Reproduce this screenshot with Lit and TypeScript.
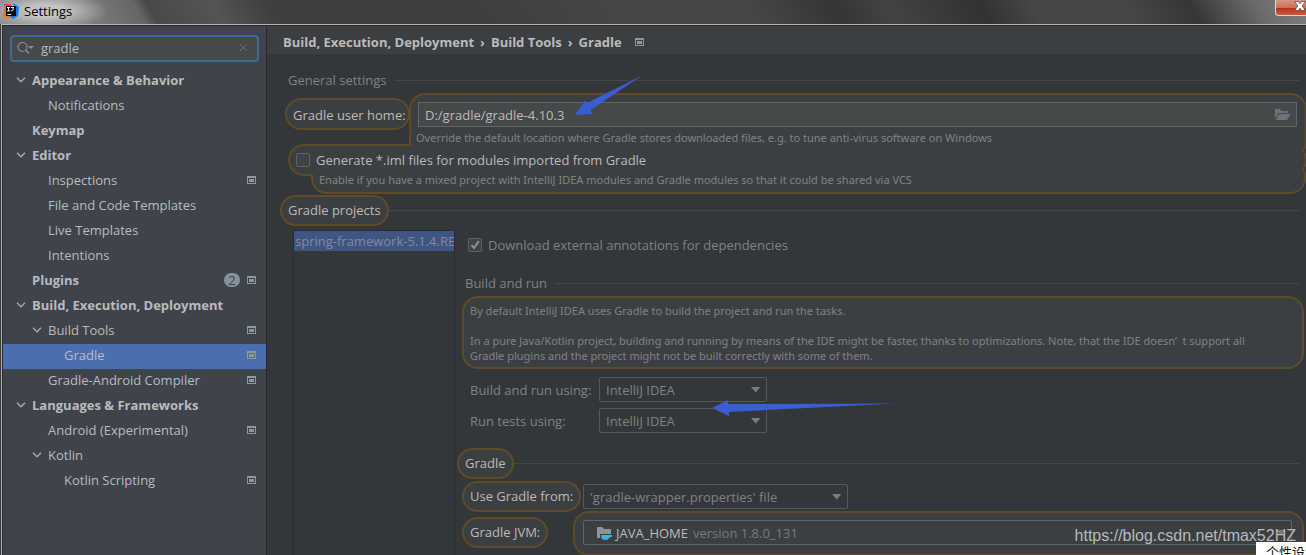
import { LitElement, html, css, svg, nothing } from "lit";
import { customElement } from "lit/decorators.js";
import { classMap } from "lit/directives/class-map.js";

interface TreeItem {
  label: string;
  level: number;
  open?: boolean;
  bold?: boolean;
  project?: boolean;
  count?: number;
  selected?: boolean;
}

const TREE: TreeItem[] = [
  { label: "Appearance & Behavior", level: 0, open: true, bold: true },
  { label: "Notifications", level: 1 },
  { label: "Keymap", level: 0, bold: true },
  { label: "Editor", level: 0, open: true, bold: true },
  { label: "Inspections", level: 1, project: true },
  { label: "File and Code Templates", level: 1 },
  { label: "Live Templates", level: 1 },
  { label: "Intentions", level: 1 },
  { label: "Plugins", level: 0, bold: true, project: true, count: 2 },
  { label: "Build, Execution, Deployment", level: 0, open: true, bold: true },
  { label: "Build Tools", level: 1, open: true, project: true },
  { label: "Gradle", level: 2, project: true, selected: true },
  { label: "Gradle-Android Compiler", level: 1, project: true },
  { label: "Languages & Frameworks", level: 0, open: true, bold: true },
  { label: "Android (Experimental)", level: 1, project: true },
  { label: "Kotlin", level: 1, open: true },
  { label: "Kotlin Scripting", level: 2, project: true },
];

const projectIcon = html`<svg class="project" width="9" height="8" viewBox="0 0 9 8" aria-hidden="true">
  <path fill="#8d979f" fill-rule="evenodd" d="M0 0h9v8H0zM1 2v5h7V2zM2 3h5v3H2z" />
</svg>`;

const chevron = html`<svg width="10" height="6" viewBox="0 0 10 6" aria-hidden="true">
  <path d="M1 .8 5 4.8 9 .8" fill="none" stroke="#a4a8ac" stroke-width="1.5" />
</svg>`;

const tick = html`<svg class="tick" width="14" height="14" viewBox="0 0 14 14" aria-hidden="true">
  <path d="M3.5 7.2 6 10 10.8 3.2" fill="none" stroke="#8f9294" stroke-width="2" />
</svg>`;

const dropArrow = html`<svg class="drop" width="10" height="6" viewBox="0 0 10 6" aria-hidden="true">
  <path d="M0 0h9.4L4.7 5.4z" fill="#797c7e" />
</svg>`;

@customElement("app-root")
export class AppRoot extends LitElement {
  static styles = css`
    :host {
      display: block;
      height: 100vh;
      overflow: hidden;
      position: relative;
      background: #333739;
      color: #bbbbbb;
      font: 13px/18px "Open Sans", "Noto Sans CJK SC", sans-serif;
    }
    *,
    *::before {
      box-sizing: border-box;
    }
    .window {
      height: 100%;
      display: flex;
      flex-direction: column;
    }
    .titlebar {
      flex: none;
      height: 24px;
      display: flex;
      align-items: flex-start;
      justify-content: space-between;
      color: #000;
      background:
        radial-gradient(ellipse 62px 20px at 46px 11px, #c4c4c4 30%, #c4c4c400),
        linear-gradient(60deg, #8a8a8a, #777 8%, #666 11%, #494949 12%, #545454 17%, #3f3f3f 21%, #3e3e3e 36%, #464646 48%, #454545 58%, #353535 64%, #434343 68%, #323232 75%, #464646 79%, #464646 86%, #363636 91%, #6b6b6b 96%, #7f7f7f);
    }
    .title {
      display: flex;
      align-items: center;
      gap: 5px;
      padding: 2px 0 0 3px;
    }
    .close {
      width: 31px;
      height: 16px;
      padding: 0;
      border: 1px solid #e6d5d2;
      border-width: 0 0 1px 1px;
      border-radius: 0 0 0 4px;
      background: linear-gradient(#d99684, #cd7059 50%, #b5311a 55%, #cf5a38);
      display: flex;
      justify-content: flex-end;
    }
    .frame {
      flex: 1;
      min-height: 0;
      display: flex;
      border: solid #b4b4b4;
      border-width: 1px 0 0 1px;
      margin-left: 1px;
    }
    .sidebar {
      flex: none;
      width: 265px;
      border: solid #26282b;
      border-width: 1px 1px 0 1px;
      background: #3f434c;
    }
    .search {
      display: flex;
      align-items: center;
      margin: 9px 7px 7px;
      height: 27px;
      border: 2px solid #3d6a96;
      border-radius: 4px;
      background: #45494a;
      padding: 0 9px 2px 5px;
      gap: 7px;
    }
    .search input {
      flex: 1;
      min-width: 0;
    }
    input.text {
      border: 0;
      padding: 0;
      outline: 0;
      background: none;
      color: inherit;
      font: inherit;
    }
    .clear,
    .browse {
      border: 0;
      padding: 0;
      background: none;
      display: flex;
    }
    .tree {
      margin: 0;
      padding: 0;
      list-style: none;
    }
    .row {
      display: flex;
      align-items: center;
      height: 25px;
      padding: 0 10px 4px 13px;
    }
    .row.selected {
      background: #4b6eaf;
    }
    .level1 {
      padding-left: 29px;
    }
    .level2 {
      padding-left: 45px;
    }
    .twist {
      width: 16px;
      display: flex;
    }
    .name {
      flex: 1;
      white-space: nowrap;
    }
    .bold .name {
      font-weight: 700;
    }
    .count {
      height: 14px;
      width: 16px;
      margin-right: 7px;
      border-radius: 7px;
      background: #84929c;
      color: #3f434c;
      line-height: 14px;
      text-align: center;
    }
    .main {
      flex: 1;
      min-width: 0;
      border-top: 1px solid #292b2c;
      display: flex;
      flex-direction: column;
      color: #808284;
    }
    .crumbs {
      flex: none;
      display: flex;
      align-items: center;
      gap: 6px;
      height: 28px;
      padding: 4px 16px 0;
      background: #3c3f41;
      color: #bbbbbb;
      font-weight: 700;
    }
    .crumbs .project {
      margin-left: 7px;
    }
    .page {
      position: relative;
      flex: 1;
      min-height: 0;
      padding: 16px 0 0 21px;
    }
    .spot {
      position: absolute;
      left: 0;
      top: 0;
      width: 100%;
      height: 160px;
    }
    .spot rect {
      fill: #3c3f41;
    }
    .spot .edge rect {
      stroke: #5f4b28;
      stroke-width: 4px;
    }
    .r1 {
      width: 121px;
    }
    .r2 {
      width: calc(100% - 145px);
    }
    .r3 {
      width: calc(100% - 145px);
    }
    .r4 {
      width: calc(100% - 24px);
    }
    .r5 {
      width: calc(100% - 48px);
    }
    .section {
      position: relative;
      display: flex;
      align-items: center;
      gap: 8px;
      height: 20px;
    }
    .section::after {
      content: "";
      flex: 1;
      height: 1px;
      background: #43474a;
      margin-right: 6px;
    }
    .pill {
      border: 2px solid #5f4b28;
      border-radius: 16px;
      background: #3c3f41;
      height: 31px;
      padding: 0 6px;
      margin-left: -8px;
      line-height: 26px;
      color: #bbbbbb;
      white-space: nowrap;
    }
    .section .pill {
      margin-right: -8px;
    }
    .home {
      position: relative;
      display: grid;
      grid-template-columns: 125px 1fr;
      align-items: center;
      margin: 12px 9px 0 5px;
      color: #bbbbbb;
    }
    .field {
      display: flex;
      align-items: center;
      height: 25px;
      border: 1px solid #646464;
      background: #45494a;
      padding: 0 5px 0 6px;
    }
    .field input {
      flex: 1;
    }
    .hint {
      position: relative;
      font-family: "Noto Sans", sans-serif;
      font-size: 11px;
      line-height: 15px;
      margin: 0;
    }
    .hint.override {
      margin: 3px 0 0 128px;
    }
    .hint.share {
      margin: 3px 0 0 31px;
    }
    .check {
      position: relative;
      display: flex;
      align-items: center;
      gap: 6px;
    }
    .check.iml {
      margin: 6px 0 0 8px;
      color: #bbbbbb;
    }
    .box {
      display: grid;
      width: 14px;
      height: 14px;
    }
    .box > * {
      grid-area: 1 / 1;
    }
    .box input {
      appearance: none;
      margin: 0;
      width: 14px;
      height: 14px;
      border: 1px solid #606365;
      border-radius: 2px;
      background: #3f4345;
    }
    .projects {
      margin-top: 13px;
    }
    .split {
      display: flex;
      margin: 10px 0 0 5px;
    }
    .list {
      flex: none;
      width: 162px;
      height: 400px;
      margin: 0;
      padding: 0;
      list-style: none;
      overflow: hidden;
      border: 1px solid #2a2d2e;
      white-space: nowrap;
    }
    .list li {
      height: 20px;
      padding-left: 1px;
      line-height: 20px;
      background: #3f5583;
      color: #858a93;
    }
    .details {
      flex: 1;
      min-width: 0;
      padding-left: 10px;
    }
    .check.download {
      margin: 6px 0 0 3px;
    }
    .build {
      margin-top: 19px;
    }
    .note {
      margin: 3px 2px 8px -3px;
      border: 2px solid #5f4b28;
      border-radius: 16px;
      background: #3c3f41;
      padding: 5px 36px 4px 6px;
      font-family: "Noto Sans", sans-serif;
      font-size: 11px;
      line-height: 15px;
    }
    .note p {
      margin: 0 0 15px;
    }
    .note p:last-child {
      margin: 0;
    }
    .form {
      display: grid;
      grid-template-columns: 129px auto;
      row-gap: 6px;
      align-items: center;
      justify-content: start;
      padding-left: 5px;
    }
    .combo {
      display: grid;
      align-items: center;
      width: 168px;
      height: 25px;
    }
    .combo > * {
      grid-area: 1 / 1;
    }
    .combo select,
    .jdk {
      appearance: none;
      width: 100%;
      height: 100%;
      border: 1px solid #56595b;
      border-radius: 2px;
      background: none;
      color: inherit;
      font: inherit;
      padding: 0 6px;
    }
    .drop {
      justify-self: end;
      margin-right: 6px;
      pointer-events: none;
    }
    .gradle {
      margin-top: 20px;
    }
    .source,
    .jvm {
      display: grid;
      grid-template-columns: 113px 1fr;
      align-items: center;
      justify-items: start;
      padding-left: 5px;
      margin-top: 8px;
    }
    .source .combo {
      width: 265px;
    }
    .jvm {
      grid-template-columns: 103px 1fr;
      align-items: start;
      margin: 0 2px 0 0;
    }
    .jvm .pill {
      margin-top: 5px;
    }
    .jvmspot {
      justify-self: stretch;
      border: 2px solid #5f4b28;
      border-radius: 16px;
      background: #3c3f41;
      padding: 7px 10px 9px 8px;
      margin-top: -1px;
    }
    .jvmspot .combo {
      width: 100%;
    }
    .jdk {
      display: flex;
      align-items: center;
      gap: 4px;
      padding-left: 13px;
      border-color: #646464;
      color: #bbbbbb;
    }
    .version {
      color: #787a7c;
      margin-left: 1px;
    }
    .arrows {
      position: absolute;
      left: 0;
      top: 0;
      pointer-events: none;
    }
    .watermark {
      position: absolute;
      right: 10px;
      bottom: 9px;
      font: 16px/20px "Liberation Sans", Arial, sans-serif;
      color: #b9babb;
    }
    .popup {
      position: absolute;
      right: 0;
      bottom: 0;
      width: 50px;
      height: 13px;
      overflow: hidden;
      background: #fff;
      color: #111;
      padding-left: 10px;
      white-space: nowrap;
      font: 13px/20px "Noto Sans CJK SC", sans-serif;
    }
  `;

  private row(item: TreeItem) {
    return html`<li
      class=${classMap({
        row: true,
        [`level${item.level}`]: true,
        bold: !!item.bold,
        selected: !!item.selected,
      })}
    >
      <span class="twist">${item.open ? chevron : nothing}</span>
      <span class="name">${item.label}</span>
      ${item.count ? html`<span class="count">${item.count}</span>` : nothing}
      ${item.project ? projectIcon : nothing}
    </li>`;
  }

  private spotRects() {
    return svg`
      <rect class="r1" x="20" y="46" height="28" rx="14" />
      <rect class="r2" x="144" y="41" height="44" rx="14" />
      <rect class="r3" x="144" y="66" height="36" rx="14" />
      <rect class="r4" x="23" y="92" height="28" rx="14" />
      <rect class="r5" x="46" y="108" height="30" rx="14" />
    `;
  }

  render() {
    return html`
      <div class="window">
        <header class="titlebar">
          <div class="title">
            <svg width="16" height="16" viewBox="0 0 16 16" aria-hidden="true">
              <path d="M1 1h7l2 5-6 9-4-3 2-4z" fill="#fe315d" />
              <path d="M0 7l5 1 3 6-3 2-4-2z" fill="#f97a12" />
              <path d="M10 0l6 4-1 9-5 3-4-3 6-6z" fill="#087cfa" />
              <path d="M3 3h10v10H3z" fill="#000" />
              <path d="M4 4.5h3M5.5 4.5V8M4 8h3M8 4.5h3M10 4.5v2.4q0 1.2-1.9 1M4.3 11.4h4" fill="none" stroke="#fff" />
            </svg>
            <span>Settings</span>
          </div>
          <button class="close" aria-label="Close">
            <svg width="12" height="12" viewBox="0 0 12 12" aria-hidden="true">
              <path d="M.6 1.500h3.800L6 3.700l1.600-2.200h3.800L8.200 6l3.200 4.500H7.600L6 8.300l-1.600 2.200H.6L3.800 6z" fill="#fff" stroke="#4a4f5c" stroke-width=".8" />
            </svg>
          </button>
        </header>

        <div class="frame">
          <nav class="sidebar">
            <div class="search">
              <svg width="17" height="14" viewBox="0 0 17 14" aria-hidden="true">
                <circle cx="5.500" cy="6" r="4.500" fill="none" stroke="#8b8e90" stroke-width="1.200" />
                <path d="M8.800 9.300 12 12.600" stroke="#8b8e90" stroke-width="1.400" />
                <path d="M11 5h6l-3 3z" fill="#8b8e90" />
              </svg>
              <input class="text" aria-label="Search settings" value="gradle" />
              <button class="clear" aria-label="Clear">
                <svg width="9" height="9" viewBox="0 0 9 9" aria-hidden="true">
                  <path d="M1 1l7 7M8 1 1 8" stroke="#6d7173" fill="none" />
                </svg>
              </button>
            </div>
            <ul class="tree">
              ${TREE.map((item) => this.row(item))}
            </ul>
          </nav>

          <main class="main">
            <div class="crumbs">
              <span>Build, Execution, Deployment</span><span>›</span>
              <span>Build Tools</span><span>›</span>
              <span>Gradle</span>${projectIcon}
            </div>

            <div class="page">
              <svg class="spot" aria-hidden="true">
                <g class="edge">${this.spotRects()}</g>
                <g>${this.spotRects()}</g>
              </svg>

              <div class="section">General settings</div>
              <div class="home">
                <label for="home">Gradle user home:</label>
                <div class="field">
                  <input class="text" id="home" value="D:/gradle/gradle-4.10.3" />
                  <button class="browse" aria-label="Browse">
                    <svg width="16" height="12" viewBox="0 0 16 12" aria-hidden="true">
                      <path d="M0 0h5l1.500 2H13v2H3.500L0 10z" fill="#6b7379" />
                      <path d="M4 5h11.500L12 11H.800z" fill="#6b7379" />
                    </svg>
                  </button>
                </div>
              </div>
              <p class="hint override">
                Override the default location where Gradle stores downloaded files, e.g. to tune anti-virus software on
                Windows
              </p>
              <label class="check iml">
                <span class="box"><input type="checkbox" /></span>
                Generate *.iml files for modules imported from Gradle
              </label>
              <p class="hint share">
                Enable if you have a mixed project with IntelliJ IDEA modules and Gradle modules so that it could be
                shared via VCS
              </p>

              <div class="section projects"><span class="pill">Gradle projects</span></div>
              <div class="split">
                <ul class="list">
                  <li>spring-framework-5.1.4.RELEASE</li>
                </ul>
                <div class="details">
                  <label class="check download">
                    <span class="box"><input type="checkbox" checked />${tick}</span>
                    Download external annotations for dependencies
                  </label>

                  <div class="section build">Build and run</div>
                  <div class="note">
                    <p>By default IntelliJ IDEA uses Gradle to build the project and run the tasks.</p>
                    <p>
                      In a pure Java/Kotlin project, building and running by means of the IDE might be faster, thanks to
                      optimizations. Note, that the IDE doesn’&ensp;t support all Gradle plugins and the project might not
                      be built correctly with some of them.
                    </p>
                  </div>
                  <div class="form">
                    <label for="build">Build and run using:</label>
                    <div class="combo">
                      <select id="build"><option>IntelliJ IDEA</option><option>Gradle</option></select>
                      ${dropArrow}
                    </div>
                    <label for="tests">Run tests using:</label>
                    <div class="combo">
                      <select id="tests"><option>IntelliJ IDEA</option><option>Gradle</option></select>
                      ${dropArrow}
                    </div>
                  </div>

                  <div class="section gradle"><span class="pill">Gradle</span></div>
                  <div class="source">
                    <label class="pill" for="source">Use Gradle from:</label>
                    <div class="combo">
                      <select id="source"><option>'gradle-wrapper.properties' file</option></select>
                      ${dropArrow}
                    </div>
                  </div>
                  <div class="jvm">
                    <label class="pill" for="jvm">Gradle JVM:</label>
                    <div class="jvmspot">
                      <div class="combo">
                        <button class="jdk" id="jvm" aria-haspopup="listbox">
                          <svg width="15" height="14" viewBox="0 0 15 14" aria-hidden="true">
                            <path d="M0 1h5l2 2h7v5H3v4H0z" fill="#8a949b" />
                            <path d="M4 9h11v2h-2q-.600 1.600-2 2v.800H5.500V13Q4 12 4 9z" fill="#3fb3de" />
                          </svg>
                          JAVA_HOME <span class="version">version 1.8.0_131</span>
                        </button>
                        ${dropArrow}
                      </div>
                    </div>
                  </div>
                </div>
              </div>
            </div>
          </main>
        </div>
      </div>

      <svg class="arrows" width="900" height="420" viewBox="0 0 900 420" aria-hidden="true">
        <path d="M643 75 590.500 110 592.500 114 575 115 585 100.500 587 103z" fill="#3c5cd4" />
        <path d="M896 403.500 729 412v4L712 408l16-8v4z" fill="#3c5cd4" />
      </svg>
      <div class="watermark">https://blog.csdn.net/tmax52HZ</div>
      <div class="popup">个性设置</div>
    `;
  }
}
